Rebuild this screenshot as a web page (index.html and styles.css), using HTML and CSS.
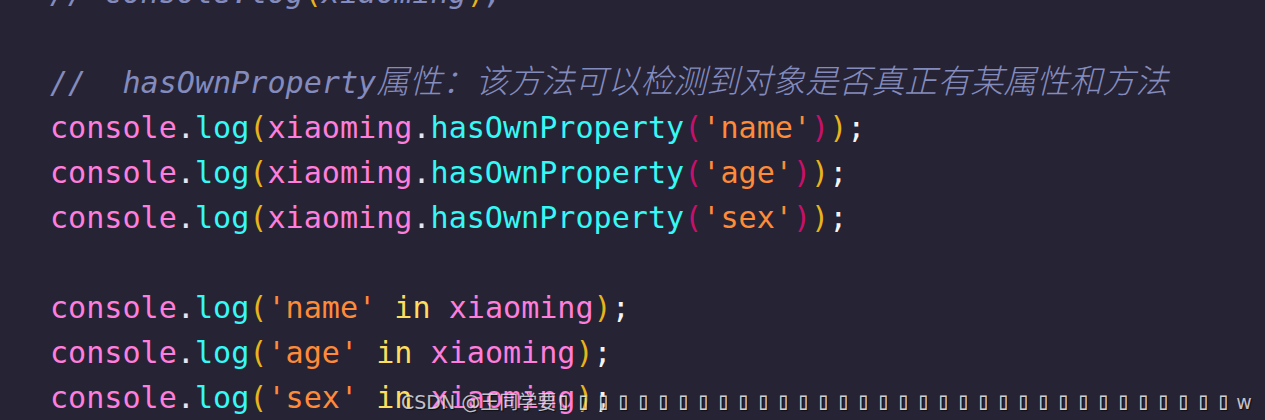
FILE: index.html
```html
<!DOCTYPE html>
<html lang="zh">
<head>
<meta charset="utf-8">
<title>hasOwnProperty</title>
<link rel="stylesheet" href="styles.css">
</head>
<body>
<div class="editor">
  <div class="code">
    <div class="line"><span class="cm">// console.log<span class="p1">(</span>xiaoming<span class="p1">)</span>;</span></div>
    <div class="line"> </div>
    <div class="line"><span class="cm">//  hasOwnProperty<span class="cjk">属性：该方法可以检测到对象是否真正有某属性和方法</span></span></div>
    <div class="line"><span class="obj">console</span><span class="dot">.</span><span class="fn">log</span><span class="p1">(</span><span class="obj">xiaoming</span><span class="dot">.</span><span class="fn">hasOwnProperty</span><span class="p2">(</span><span class="str">'name'</span><span class="p2">)</span><span class="p1">)</span><span class="semi">;</span></div>
    <div class="line"><span class="obj">console</span><span class="dot">.</span><span class="fn">log</span><span class="p1">(</span><span class="obj">xiaoming</span><span class="dot">.</span><span class="fn">hasOwnProperty</span><span class="p2">(</span><span class="str">'age'</span><span class="p2">)</span><span class="p1">)</span><span class="semi">;</span></div>
    <div class="line"><span class="obj">console</span><span class="dot">.</span><span class="fn">log</span><span class="p1">(</span><span class="obj">xiaoming</span><span class="dot">.</span><span class="fn">hasOwnProperty</span><span class="p2">(</span><span class="str">'sex'</span><span class="p2">)</span><span class="p1">)</span><span class="semi">;</span></div>
    <div class="line"> </div>
    <div class="line"><span class="obj">console</span><span class="dot">.</span><span class="fn">log</span><span class="p1">(</span><span class="str">'name'</span> <span class="kw">in</span> <span class="obj">xiaoming</span><span class="p1">)</span><span class="semi">;</span></div>
    <div class="line"><span class="obj">console</span><span class="dot">.</span><span class="fn">log</span><span class="p1">(</span><span class="str">'age'</span> <span class="kw">in</span> <span class="obj">xiaoming</span><span class="p1">)</span><span class="semi">;</span></div>
    <div class="line"><span class="obj">console</span><span class="dot">.</span><span class="fn">log</span><span class="p1">(</span><span class="str">'sex'</span> <span class="kw">in</span> <span class="obj">xiaoming</span><span class="p1">)</span><span class="semi">;</span></div>
  </div>
  <div class="watermark"><span class="wm-text">CSDN @王同学要</span><span class="tofu">▯▯▯▯▯▯▯▯▯▯▯▯▯▯▯▯▯▯▯▯▯▯▯▯▯▯▯▯▯▯▯▯▯▯</span><span class="wm-text">w</span></div>
</div>
</body>
</html>
```

FILE: styles.css
```css
html, body {
  margin: 0;
  padding: 0;
  background: #262335;
}

.editor {
  position: relative;
  width: 1265px;
  height: 420px;
  overflow: hidden;
  background: #262335;
}

.code {
  margin-top: -30px;
  padding-left: 50px;
  font-family: "DejaVu Sans Mono", monospace;
  font-size: 30.1px;
  line-height: 45px;
  color: #ffffff;
}

.line {
  height: 45px;
  white-space: pre;
}

.cm {
  color: #848bbd;
  font-style: italic;
}

.cjk {
  font-family: "Noto Sans CJK SC", sans-serif;
  font-size: 33px;
  line-height: 30px;
  font-weight: 300;
}

.obj { color: #ff7edb; }
.fn { color: #36f9f6; }
.dot { color: #e8e6f0; }
.str { color: #ff8b39; }
.kw { color: #fede5d; }
.p1 { color: #e8b41a; font-style: normal; }
.p2 { color: #c8106a; }
.semi { color: #f4f4f8; }

.watermark {
  position: absolute;
  left: 401px;
  top: 391px;
  white-space: pre;
  font-family: "DejaVu Sans", "Noto Sans CJK SC", sans-serif;
  font-size: 19px;
  line-height: 22px;
  color: rgba(225, 225, 230, 0.85);
  text-shadow: 1px 1px 1px rgba(0, 0, 0, 0.6);
}

.tofu {
  font-family: "DejaVu Sans Mono", monospace;
  font-size: 24px;
  line-height: 0;
  letter-spacing: 5.55px;
  color: rgba(235, 235, 240, 0.9);
}
```
